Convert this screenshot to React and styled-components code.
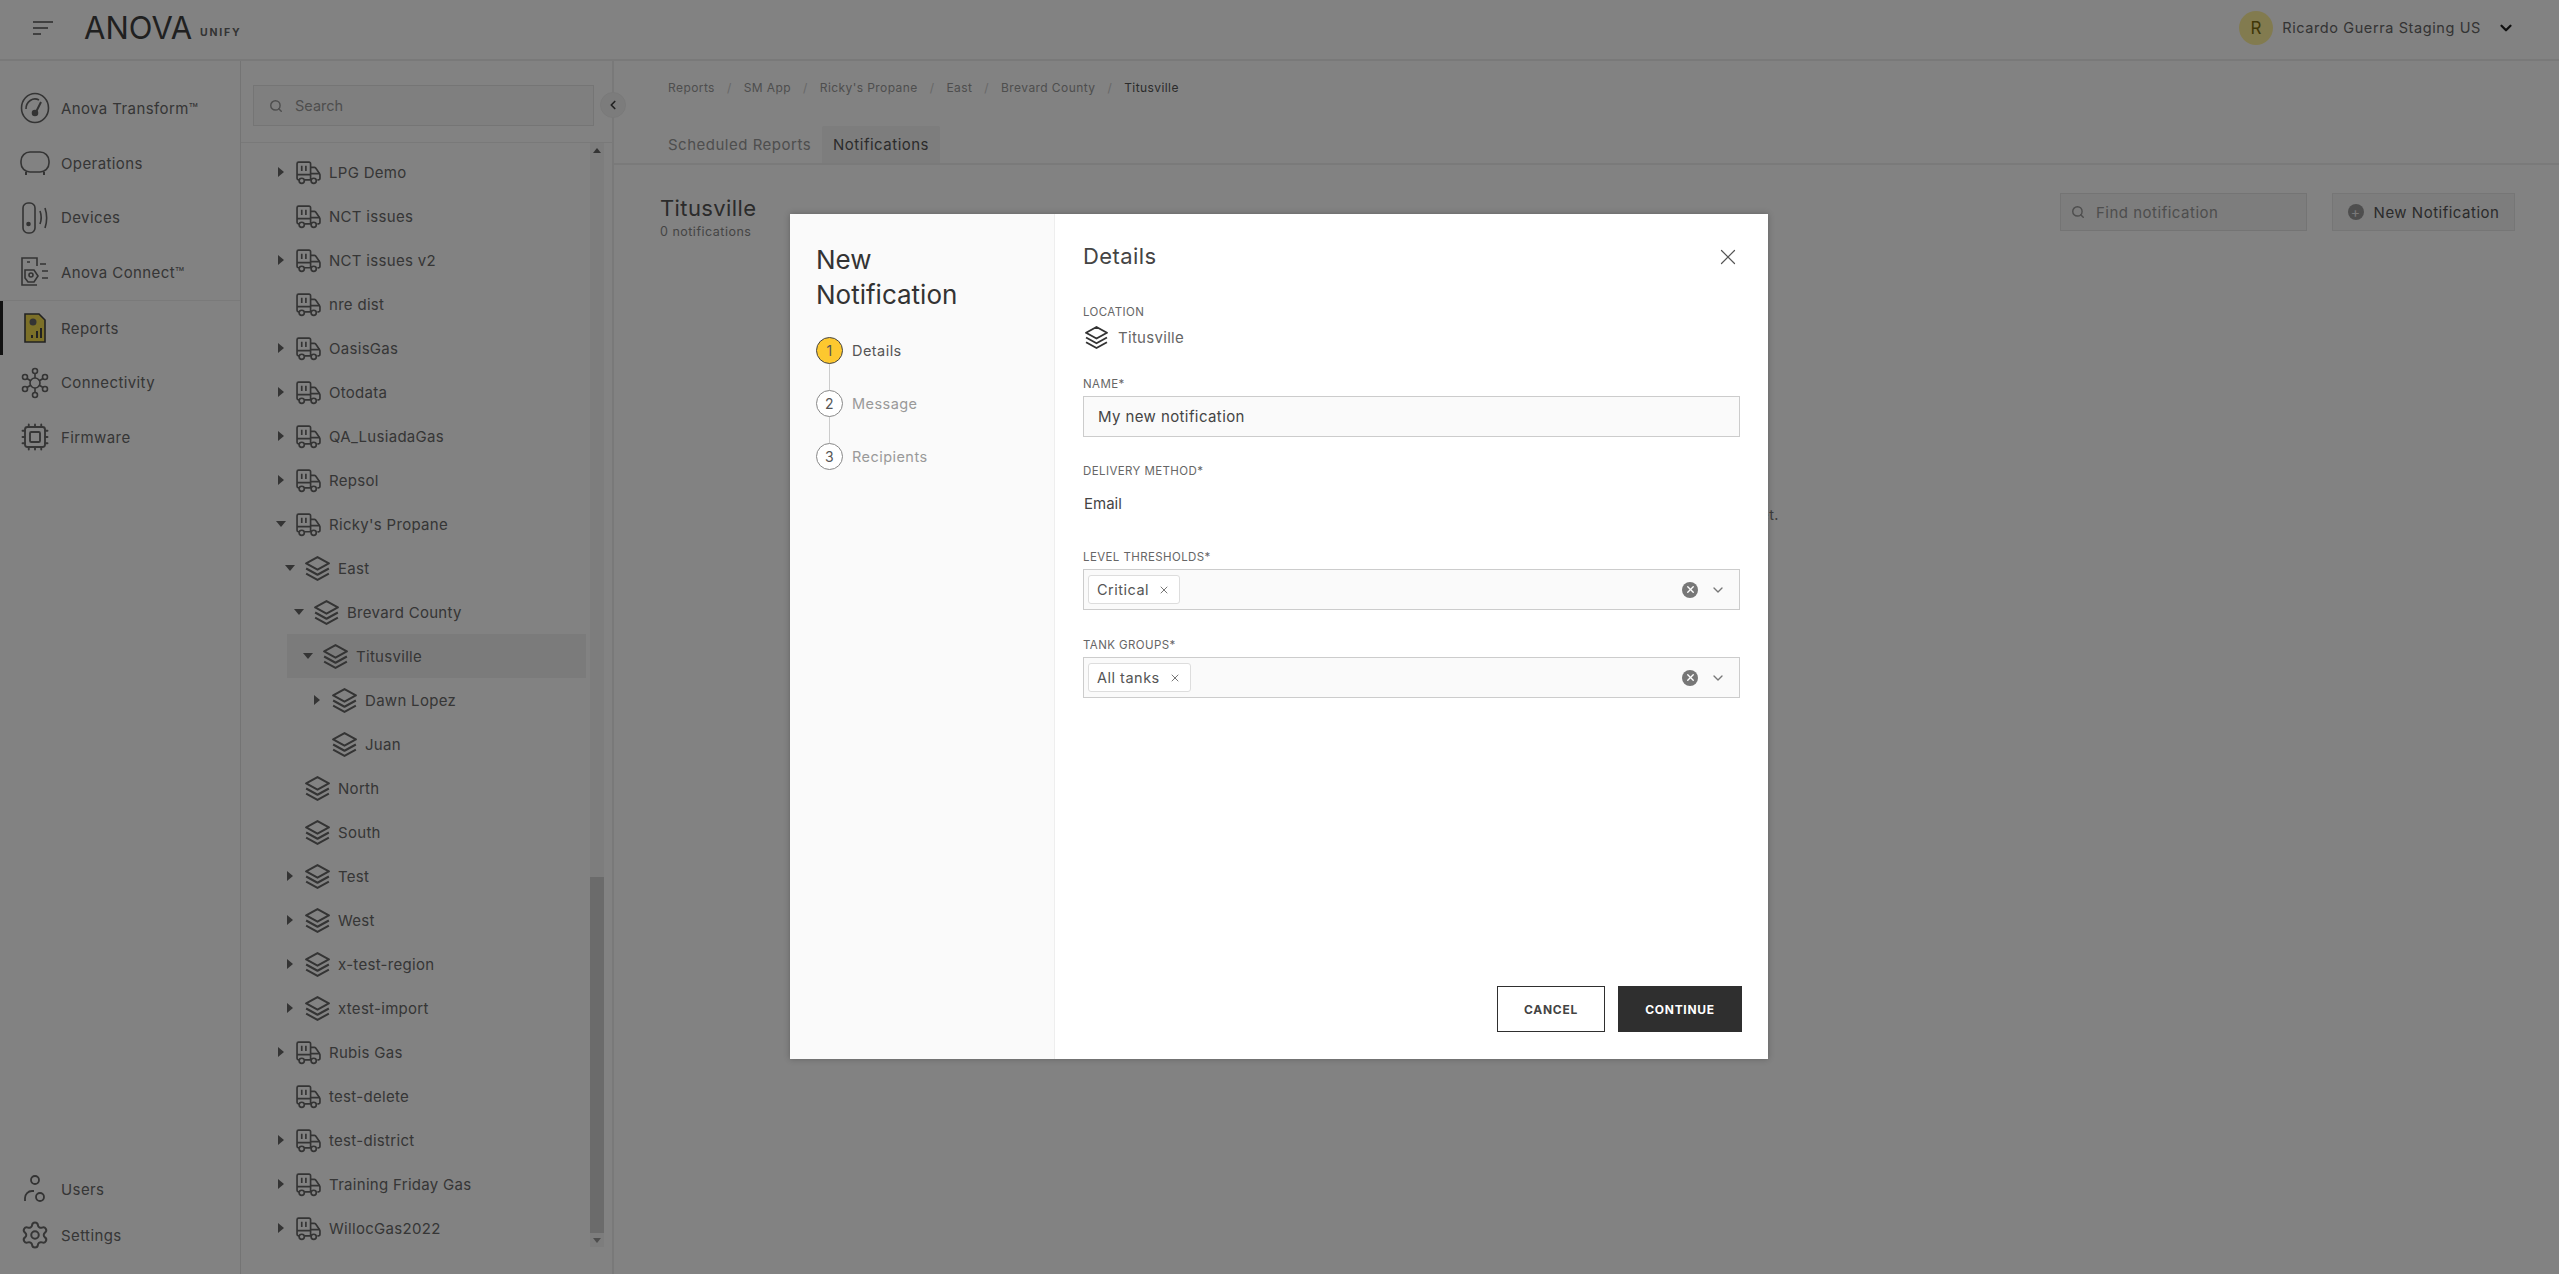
import React from "react"
import styled, { createGlobalStyle } from "styled-components"
import { ChevronDown, ChevronLeft, Search as SearchIcon, X, Settings, Cpu } from "lucide-react"

const GlobalStyle = createGlobalStyle`
	html, body {
		margin: 0;
		padding: 0;
		background: #fff;
		font-family: "Inter", "Liberation Sans", sans-serif;
	}
	* {
		box-sizing: border-box;
	}
`

const Page = styled.div`
	position: relative;
	height: 1274px;
	display: flex;
	flex-direction: column;
	overflow: hidden;
	color: #666;
`

const TopBar = styled.header`
	height: 61px;
	flex: none;
	display: flex;
	align-items: center;
	padding: 0 44px 4px 32px;
	border-bottom: 2px solid #eee;
`

const Burger = styled.svg`
	width: 22px;
	height: 16px;
	margin-right: 30px;
`

const LogoWord = styled.span`
	font-size: 31px;
	font-weight: 400;
	letter-spacing: 0;
	color: #3f3f3f;
`

const LogoSub = styled.span`
	margin: 9px 0 0 8px;
	font-size: 10.5px;
	font-weight: 700;
	letter-spacing: 1.8px;
	color: #666;
`

const UserBox = styled.div`
	margin-left: auto;
	display: flex;
	align-items: center;
	font-size: 14.5px;
	letter-spacing: 0.6px;
	color: #666;
`

const UserCaret = styled.span`
	display: flex;
	margin-left: 16px;
	color: #222;
`

const Avatar = styled.div`
	width: 34px;
	height: 34px;
	border-radius: 50%;
	background: #fff19c;
	color: #7d6d10;
	font-size: 17px;
	display: flex;
	align-items: center;
	justify-content: center;
	margin-right: 9px;
`

const Columns = styled.div`
	flex: 1;
	min-height: 0;
	display: grid;
	grid-template-columns: 241px 373px 1fr;
`

const SideNav = styled.nav`
	display: flex;
	flex-direction: column;
	border-right: 1px solid #e4e4e4;
	padding-top: 20px;
`

const NavGroup = styled.div`
	border-bottom: 1px solid #f0f0f0;
`

const NavItem = styled.div`
	height: 54.7px;
	display: flex;
	align-items: center;
	padding-left: ${(p) => (p.$active ? "17px" : "20px")};
	border-left: ${(p) => (p.$active ? "3px solid #222" : "none")};
	font-size: 15px;
	letter-spacing: 0.4px;
	color: #6a6a6a;
	svg {
		width: 30px;
		height: 32px;
		margin-right: 11px;
		flex: none;
	}
`

const NavBottom = styled.div`
	margin-top: auto;
	padding-bottom: 16px;
	${NavItem} {
		height: 46px;
	}
`

const TreePanel = styled.aside`
	position: relative;
	display: flex;
	flex-direction: column;
	min-height: 0;
	border-right: 2px solid #eee;
`

const SearchRow = styled.div`
	height: 82px;
	flex: none;
	padding: 24px 18px 0 12px;
	border-bottom: 1px solid #eee;
`

const SearchBox = styled.div`
	height: 41px;
	display: flex;
	align-items: center;
	padding-left: 15px;
	border: 1px solid #e6e6e6;
	background: #fafafa;
	font-size: 14.5px;
	color: #999;
	svg {
		margin-right: 12px;
	}
`

const CollapseButton = styled.div`
	position: absolute;
	top: 31px;
	right: -14px;
	width: 26px;
	height: 26px;
	border-radius: 50%;
	background: #f4f4f4;
	border: 1px solid #eee;
	display: flex;
	align-items: center;
	justify-content: center;
	color: #444;
`

const TreeBody = styled.div`
	flex: 1;
	min-height: 0;
	display: flex;
	padding-bottom: 27px;
`

const TreeList = styled.div`
	flex: 1;
	padding: 7px 4px 0 30px;
`

const Row = styled.div`
	height: 44px;
	display: flex;
	align-items: center;
	margin-left: ${(p) => (p.$selected ? "16px" : "0")};
	padding-left: ${(p) => p.$depth * 9 - (p.$selected ? 16 : 0)}px;
	background: ${(p) => (p.$selected ? "#f2f2f2" : "transparent")};
	font-size: 15px;
	letter-spacing: 0.3px;
	color: #6a6a6a;
`

const Caret = styled.span`
	width: 18px;
	height: 18px;
	flex: none;
	margin: 0 6px 0 1px;
	display: flex;
	align-items: center;
	justify-content: center;
	&::before {
		content: "";
		display: ${(p) => (p.$dir ? "block" : "none")};
		border-style: solid;
		border-color: transparent;
		${(p) =>
			p.$dir === "down"
				? "border-width: 6px 5px 0 5px; border-top-color: #666;"
				: "border-width: 5px 0 5px 6px; border-left-color: #666;"}
	}
`

const RowIcon = styled.svg`
	width: 25px;
	height: 25px;
	flex: none;
	margin-right: 8px;
`

const ScrollTrack = styled.div`
	width: 14px;
	flex: none;
	margin-right: 8px;
	display: flex;
	flex-direction: column;
	align-items: center;
	background: #f5f5f5;
`

const ScrollArrow = styled.span`
	height: 14px;
	flex: none;
	display: flex;
	align-items: center;
	justify-content: center;
	&::before {
		content: "";
		border-style: solid;
		border-color: transparent;
		${(p) =>
			p.$up
				? "border-width: 0 4px 5px 4px; border-bottom-color: #666;"
				: "border-width: 5px 4px 0 4px; border-top-color: #999;"}
	}
`

const ScrollSpace = styled.div`
	flex: 1;
`

const ScrollThumb = styled.div`
	width: 100%;
	height: 356px;
	flex: none;
	background: #d2d2d2;
`

const Main = styled.main`
	display: flex;
	flex-direction: column;
	min-width: 0;
`

const Crumbs = styled.div`
	height: 52px;
	flex: none;
	display: flex;
	align-items: center;
	padding: 0 0 0 54px;
	font-size: 12px;
	letter-spacing: 0.42px;
	color: #999;
`

const Crumb = styled.span`
	color: ${(p) => (p.$current ? "#555" : "#999")};
	&:not(:last-child)::after {
		content: "/";
		margin: 0 12px;
		color: #ccc;
	}
`

const TabBar = styled.div`
	height: 52px;
	flex: none;
	display: flex;
	align-items: flex-end;
	padding-left: 43px;
	border-bottom: 2px solid #f0f0f0;
`

const Tab = styled.div`
	height: 37px;
	display: flex;
	align-items: center;
	padding: 0 11px;
	font-size: 15px;
	letter-spacing: 0.5px;
	color: ${(p) => (p.$active ? "#555" : "#999")};
	background: ${(p) => (p.$active ? "#f5f5f5" : "transparent")};
	border-radius: 2px 2px 0 0;
`

const TitleRow = styled.div`
	display: flex;
	align-items: flex-start;
	padding: 28px 44px 0 46px;
`

const TitleBlock = styled.div`
	margin-right: auto;
`

const PageTitle = styled.div`
	font-size: 22px;
	line-height: 30px;
	letter-spacing: 0.4px;
	color: #555;
`

const PageCount = styled.div`
	font-size: 12.5px;
	line-height: 18px;
	letter-spacing: 0.5px;
	color: #888;
`

const FindBox = styled.div`
	width: 247px;
	height: 38px;
	display: flex;
	align-items: center;
	padding-left: 10px;
	margin-right: 25px;
	background: #f5f5f5;
	border: 1px solid #e4e4e4;
	font-size: 15px;
	letter-spacing: 0.5px;
	color: #999;
	svg {
		margin-right: 11px;
	}
`

const NewButton = styled.div`
	width: 183px;
	height: 38px;
	display: flex;
	align-items: center;
	justify-content: center;
	background: #f5f5f5;
	border: 1px solid #e8e8e8;
	font-size: 15px;
	letter-spacing: 0.5px;
	color: #555;
`

const PlusDot = styled.span`
	width: 16px;
	height: 16px;
	border-radius: 50%;
	background: #999;
	color: #eee;
	font-size: 14px;
	line-height: 15px;
	text-align: center;
	margin-right: 10px;
`

const EmptyNote = styled.div`
	margin-top: 265px;
	text-align: center;
	font-size: 14.5px;
	letter-spacing: 0.42px;
	color: #777;
`

const Backdrop = styled.div`
	position: absolute;
	inset: 0;
	background: rgba(0, 0, 0, 0.49);
	display: flex;
	align-items: center;
	justify-content: center;
`

const Modal = styled.div`
	width: 978px;
	height: 845px;
	margin: 0 1px 1px 0;
	display: flex;
	background: #fff;
	box-shadow: 0 0 6px rgba(0, 0, 0, 0.25);
`

const StepsPane = styled.div`
	width: 265px;
	flex: none;
	padding: 28px 20px 0 26px;
	background: #fafafa;
	border-right: 1px solid #eee;
`

const ModalTitle = styled.h2`
	max-width: 180px;
	margin: 0 0 25px;
	font-size: 26px;
	line-height: 35px;
	font-weight: 400;
	color: #333;
`

const Step = styled.div`
	display: flex;
	align-items: center;
	height: 26px;
	font-size: 14.5px;
	letter-spacing: 0.45px;
	color: ${(p) => (p.$active ? "#555" : "#999")};
`

const StepDot = styled.span`
	width: 27px;
	height: 27px;
	flex: none;
	margin-right: 9px;
	border-radius: 50%;
	border: 1px solid ${(p) => (p.$active ? "#444" : "#888")};
	background: ${(p) => (p.$active ? "#fdc82f" : "#fff")};
	color: #555;
	font-size: 14px;
	display: flex;
	align-items: center;
	justify-content: center;
`

const StepLine = styled.div`
	width: 1px;
	height: 27px;
	margin-left: 13px;
	background: #ccc;
`

const FormPane = styled.div`
	flex: 1;
	min-width: 0;
	display: flex;
	flex-direction: column;
	padding: 27px 26px 27px 28px;
`

const FormHead = styled.div`
	display: flex;
	align-items: center;
	justify-content: space-between;
	height: 30px;
	margin-bottom: 34px;
	font-size: 22px;
	letter-spacing: 0.4px;
	color: #444;
	svg {
		margin: 2px 1px 0 0;
		color: #555;
	}
`

const FieldLabel = styled.div`
	font-size: 11.5px;
	line-height: 14px;
	letter-spacing: 0.4px;
	color: #666;
	margin-top: ${(p) => p.$gap || 0}px;
	margin-bottom: 5px;
`

const LocationRow = styled.div`
	display: flex;
	align-items: center;
	height: 26px;
	font-size: 15px;
	letter-spacing: 0.3px;
	color: #666;
	svg {
		width: 23px;
		height: 23px;
		margin: 0 10px 0 2px;
	}
`

const TextField = styled.div`
	width: 657px;
	height: 41px;
	display: flex;
	align-items: center;
	padding-left: 14px;
	background: #fafafa;
	border: 1px solid #ccc;
	font-size: 15px;
	letter-spacing: 0.4px;
	color: #444;
`

const PlainValue = styled.div`
	height: 30px;
	display: flex;
	align-items: center;
	margin-top: 5px;
	padding-left: 1px;
	font-size: 15px;
	color: #444;
`

const SelectField = styled(TextField)`
	padding: 0 13px 0 4px;
`

const Chip = styled.span`
	height: 29px;
	display: flex;
	align-items: center;
	padding: 0 9px 0 8px;
	background: #fff;
	border: 1px solid #ddd;
	border-radius: 3px;
	font-size: 14.5px;
	letter-spacing: 0.5px;
	color: #555;
	svg {
		margin-left: 9px;
		color: #777;
	}
`

const ClearDot = styled.span`
	margin-left: auto;
	width: 16px;
	height: 16px;
	border-radius: 50%;
	background: #777;
	color: #fff;
	display: flex;
	align-items: center;
	justify-content: center;
`

const SelectChevron = styled.span`
	display: flex;
	margin-left: 12px;
	color: #777;
`

const Actions = styled.div`
	margin-top: auto;
	display: flex;
	justify-content: flex-end;
	gap: 13px;
`

const ActionButton = styled.div`
	width: ${(p) => (p.$primary ? "124px" : "108px")};
	height: 46px;
	display: flex;
	align-items: center;
	justify-content: center;
	border: 1px solid #2f2f2f;
	background: ${(p) => (p.$primary ? "#2f2f2f" : "#fff")};
	color: ${(p) => (p.$primary ? "#fff" : "#444")};
	font-size: 12px;
	font-weight: 700;
	letter-spacing: 0.7px;
`

const TruckGlyph = () => (
	<RowIcon viewBox="0 0 24 24" fill="none" stroke="#666" strokeWidth="1.6">
		<path d="M3.2 19H2.5A1.5 1.5 0 0 1 1 17.5V3.5A1.5 1.5 0 0 1 2.5 2H12.5A1.5 1.5 0 0 1 14 3.5V19H8" />
		<path d="M14 7h3.5c.6 0 1 .2 1.4.7l3.6 5.3c.3.4.5.9.5 1.4V17.5A1.5 1.5 0 0 1 21 19h-.5" />
		<path d="M5.5 5.5v5M9.5 5.5v5M1 14h13M14 13h9" />
		<circle cx="5.5" cy="20" r="2.5" />
		<circle cx="17" cy="20" r="2.5" />
	</RowIcon>
)

const LayersGlyph = ({ color = "#666" }) => (
	<RowIcon viewBox="1 1 22 22" fill="none" stroke={color} strokeWidth="1.8" strokeLinejoin="round">
		<path d="M12 2 22 7.5 12 13 2 7.5Z" />
		<path d="M2 12l10 5.5L22 12" />
		<path d="M2 16.5 12 22l10-5.5" />
	</RowIcon>
)

const GaugeGlyph = () => (
	<svg viewBox="0 0 30 32" fill="none" stroke="#666" strokeWidth="1.6">
		<ellipse cx="15" cy="16" rx="13.5" ry="14.5" />
		<path d="M6 17a9 10 0 0 1 13-9" />
		<path d="M21 10 16 20" strokeWidth="2" />
		<circle cx="15" cy="21" r="2.5" fill="#666" />
	</svg>
)

const TankGlyph = () => (
	<svg viewBox="0 0 30 32" fill="none" stroke="#666" strokeWidth="1.6">
		<rect x="1" y="5" width="28" height="20" rx="9" />
		<path d="M6 25v3M24 25v3" strokeWidth="2" />
	</svg>
)

const DeviceGlyph = () => (
	<svg viewBox="0 0 30 32" fill="none" stroke="#666" strokeWidth="1.6">
		<rect x="3" y="1" width="12" height="30" rx="5" />
		<circle cx="8.5" cy="22" r="1.5" fill="#666" />
		<path d="M20 9c1.5 4 1.5 9 0 13M25 6c2 6 2 14 0 20" />
	</svg>
)

const ConnectGlyph = () => (
	<svg viewBox="0 0 30 32" fill="none" stroke="#666" strokeWidth="1.6">
		<path d="M17 29H2V2h15v8" />
		<path d="M5 14h9l4 6-4 6H8l-3-4z" />
		<path d="M7 6h3M20 8h6M22 15h6M22 22h6" />
		<circle cx="11" cy="19" r="2" />
	</svg>
)

const ReportGlyph = () => (
	<svg viewBox="0 0 30 32" fill="none" stroke="#444" strokeWidth="1.6">
		<path d="M5 2h14l6 6v22H5z" fill="#f3dc50" />
		<circle cx="13" cy="10" r="3.5" fill="#666" stroke="none" />
		<path d="M12 26v-3M17 26v-7M21 26v-10" strokeWidth="2" />
	</svg>
)

const NetworkGlyph = () => (
	<svg viewBox="0 0 30 32" fill="none" stroke="#666" strokeWidth="1.6">
		<circle cx="15" cy="16" r="5" />
		<circle cx="15" cy="4" r="2.5" />
		<circle cx="15" cy="28" r="2.5" />
		<circle cx="5" cy="10" r="2.5" />
		<circle cx="25" cy="10" r="2.5" />
		<circle cx="5" cy="22" r="2.5" />
		<circle cx="25" cy="22" r="2.5" />
		<path d="M15 6.5V11M15 21v4.5M7 11.5l4 2.5M23 11.5l-4 2.5M7 20.5l4-2.5M23 20.5l-4-2.5" />
	</svg>
)

const UsersGlyph = () => (
	<svg viewBox="0 0 30 32" fill="none" stroke="#666" strokeWidth="1.8">
		<circle cx="15" cy="7" r="4" />
		<path d="M5 28v-3a7 7 0 0 1 7-7h2" />
		<circle cx="20" cy="24" r="4" />
	</svg>
)

const treeRows = [
	{ name: "LPG Demo", depth: 0, caret: "right", kind: "truck" },
	{ name: "NCT issues", depth: 0, kind: "truck" },
	{ name: "NCT issues v2", depth: 0, caret: "right", kind: "truck" },
	{ name: "nre dist", depth: 0, kind: "truck" },
	{ name: "OasisGas", depth: 0, caret: "right", kind: "truck" },
	{ name: "Otodata", depth: 0, caret: "right", kind: "truck" },
	{ name: "QA_LusiadaGas", depth: 0, caret: "right", kind: "truck" },
	{ name: "Repsol", depth: 0, caret: "right", kind: "truck" },
	{ name: "Ricky's Propane", depth: 0, caret: "down", kind: "truck" },
	{ name: "East", depth: 1, caret: "down" },
	{ name: "Brevard County", depth: 2, caret: "down" },
	{ name: "Titusville", depth: 3, caret: "down", selected: true },
	{ name: "Dawn Lopez", depth: 4, caret: "right" },
	{ name: "Juan", depth: 4 },
	{ name: "North", depth: 1 },
	{ name: "South", depth: 1 },
	{ name: "Test", depth: 1, caret: "right" },
	{ name: "West", depth: 1, caret: "right" },
	{ name: "x-test-region", depth: 1, caret: "right" },
	{ name: "xtest-import", depth: 1, caret: "right" },
	{ name: "Rubis Gas", depth: 0, caret: "right", kind: "truck" },
	{ name: "test-delete", depth: 0, kind: "truck" },
	{ name: "test-district", depth: 0, caret: "right", kind: "truck" },
	{ name: "Training Friday Gas", depth: 0, caret: "right", kind: "truck" },
	{ name: "WillocGas2022", depth: 0, caret: "right", kind: "truck" },
]

const crumbs = ["Reports", "SM App", "Ricky's Propane", "East", "Brevard County", "Titusville"]

const App = () => (
	<Page>
		<GlobalStyle />
		<TopBar>
			<Burger viewBox="0 0 22 16" fill="none" stroke="#555" strokeWidth="1.6">
				<path d="M1 2h20M1 8h15M1 14h8" />
			</Burger>
			<LogoWord>ANOVA</LogoWord>
			<LogoSub>UNIFY</LogoSub>
			<UserBox>
				<Avatar>R</Avatar>
				Ricardo Guerra Staging US
				<UserCaret><ChevronDown size={18} strokeWidth={3} /></UserCaret>
			</UserBox>
		</TopBar>
		<Columns>
			<SideNav>
				<NavGroup>
					<NavItem><GaugeGlyph />Anova Transform™</NavItem>
					<NavItem><TankGlyph />Operations</NavItem>
					<NavItem><DeviceGlyph />Devices</NavItem>
					<NavItem><ConnectGlyph />Anova Connect™</NavItem>
				</NavGroup>
				<NavItem $active><ReportGlyph />Reports</NavItem>
				<NavItem><NetworkGlyph />Connectivity</NavItem>
				<NavItem><Cpu strokeWidth={1.5} />Firmware</NavItem>
				<NavBottom>
					<NavItem><UsersGlyph />Users</NavItem>
					<NavItem><Settings strokeWidth={1.6} />Settings</NavItem>
				</NavBottom>
			</SideNav>
			<TreePanel>
				<SearchRow>
					<SearchBox>
						<SearchIcon size={14} strokeWidth={2.5} />
						Search
					</SearchBox>
				</SearchRow>
				<CollapseButton>
					<ChevronLeft size={14} strokeWidth={3} />
				</CollapseButton>
				<TreeBody>
					<TreeList>
						{treeRows.map((row) => (
							<Row key={row.name} $depth={row.depth} $selected={row.selected}>
								<Caret $dir={row.caret} />
								{row.kind === "truck" ? <TruckGlyph /> : <LayersGlyph />}
								{row.name}
							</Row>
						))}
					</TreeList>
					<ScrollTrack>
						<ScrollArrow $up />
						<ScrollSpace />
						<ScrollThumb />
						<ScrollArrow />
					</ScrollTrack>
				</TreeBody>
			</TreePanel>
			<Main>
				<Crumbs>
					{crumbs.map((c, i) => (
						<Crumb key={c} $current={i === crumbs.length - 1}>{c}</Crumb>
					))}
				</Crumbs>
				<TabBar>
					<Tab>Scheduled Reports</Tab>
					<Tab $active>Notifications</Tab>
				</TabBar>
				<TitleRow>
					<TitleBlock>
						<PageTitle>Titusville</PageTitle>
						<PageCount>0 notifications</PageCount>
					</TitleBlock>
					<FindBox>
						<SearchIcon size={14} strokeWidth={2.5} />
						Find notification
					</FindBox>
					<NewButton>
						<PlusDot>+</PlusDot>
						New Notification
					</NewButton>
				</TitleRow>
				<EmptyNote>There are no notifications set up for this location yet.</EmptyNote>
			</Main>
		</Columns>
		<Backdrop>
			<Modal>
				<StepsPane>
					<ModalTitle>New Notification</ModalTitle>
					<Step $active><StepDot $active>1</StepDot>Details</Step>
					<StepLine />
					<Step><StepDot>2</StepDot>Message</Step>
					<StepLine />
					<Step><StepDot>3</StepDot>Recipients</Step>
				</StepsPane>
				<FormPane>
					<FormHead>
						Details
						<X size={26} strokeWidth={1.1} />
					</FormHead>
					<FieldLabel>LOCATION</FieldLabel>
					<LocationRow>
						<LayersGlyph color="#333" />
						Titusville
					</LocationRow>
					<FieldLabel $gap={27}>NAME*</FieldLabel>
					<TextField>My new notification</TextField>
					<FieldLabel $gap={27}>DELIVERY METHOD*</FieldLabel>
					<PlainValue>Email</PlainValue>
					<FieldLabel $gap={32}>LEVEL THRESHOLDS*</FieldLabel>
					<SelectField>
						<Chip>Critical<X size={12} strokeWidth={2} /></Chip>
						<ClearDot><X size={11} strokeWidth={3} /></ClearDot>
						<SelectChevron><ChevronDown size={16} strokeWidth={2} /></SelectChevron>
					</SelectField>
					<FieldLabel $gap={28}>TANK GROUPS*</FieldLabel>
					<SelectField>
						<Chip>All tanks<X size={12} strokeWidth={2} /></Chip>
						<ClearDot><X size={11} strokeWidth={3} /></ClearDot>
						<SelectChevron><ChevronDown size={16} strokeWidth={2} /></SelectChevron>
					</SelectField>
					<Actions>
						<ActionButton>CANCEL</ActionButton>
						<ActionButton $primary>CONTINUE</ActionButton>
					</Actions>
				</FormPane>
			</Modal>
		</Backdrop>
	</Page>
)

export default App
